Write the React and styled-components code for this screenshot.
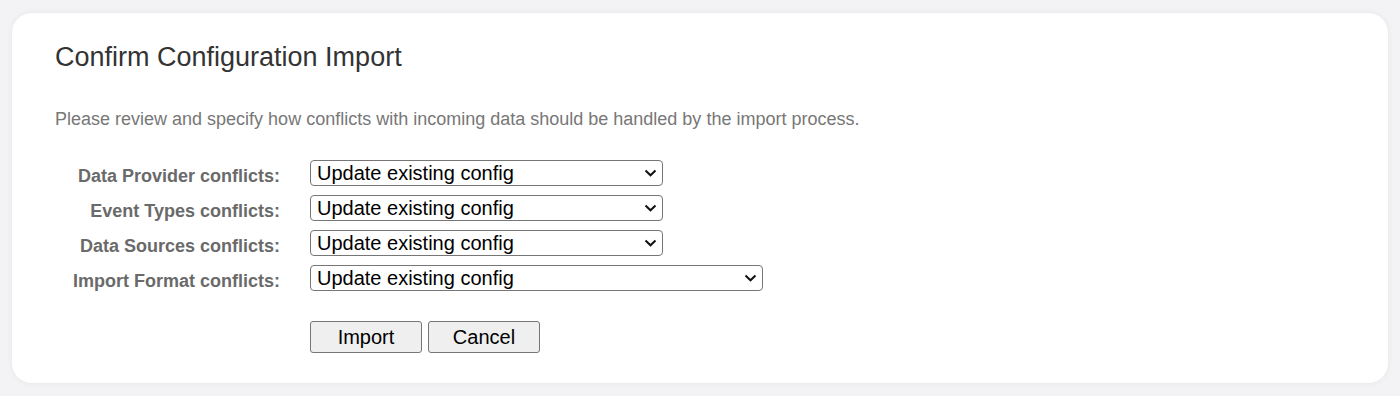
import React from "react";
import styled, { createGlobalStyle } from "styled-components";

const GlobalStyle = createGlobalStyle`
  html, body {
    margin: 0;
    padding: 0;
    background: #f3f3f5;
    font-family: "Liberation Sans", Arial, sans-serif;
  }
`;

const SPage = styled.div`
  padding: 13px 12px;
`;

const SCard = styled.div`
  background: #ffffff;
  border-radius: 20px;
  box-shadow: 0 0 6px rgba(0, 0, 0, 0.06);
  padding: 29px 43px 30px 43px;
`;

const STitle = styled.h1`
  margin: 0;
  font-size: 27px;
  line-height: 31px;
  font-weight: normal;
  color: #333333;
`;

const SIntro = styled.p`
  margin: 36px 0 0;
  font-size: 18px;
  line-height: 21px;
  color: #777777;
`;

const SForm = styled.div`
  display: grid;
  grid-template-columns: 225px auto;
  column-gap: 30px;
  row-gap: 9px;
  margin-top: 30px;
  justify-items: start;
  align-items: center;
`;

const SLabel = styled.label`
  justify-self: end;
  font-size: 18px;
  line-height: 20px;
  font-weight: bold;
  color: #6a6a6a;
  padding-top: 5px;
`;

const SSelectWrap = styled.div`
  position: relative;
  display: flex;
`;

const SSelect = styled.select`
  appearance: none;
  -webkit-appearance: none;
  width: ${(props) => props.width}px;
  height: 26px;
  font-family: "Liberation Sans", Arial, sans-serif;
  font-size: 20px;
  line-height: 22px;
  color: #000;
  border: 1px solid #767676;
  border-radius: 4px;
  background: #fff;
  padding: 0 24px 0 6px;
`;

const SChevron = styled.svg`
  position: absolute;
  right: 6px;
  top: 9px;
  width: 13px;
  height: 8px;
  pointer-events: none;
`;

const SActions = styled.div`
  grid-column: 2;
  display: flex;
  gap: 6px;
  margin-top: 21px;
`;

const SButton = styled.button`
  width: 112px;
  height: 32px;
  font-family: "Liberation Sans", Arial, sans-serif;
  font-size: 20px;
  color: #000;
  background: #efefef;
  border: 1px solid #767676;
  border-radius: 3px;
  padding: 0;
`;

const rows = [
  { label: "Data Provider conflicts:", width: 353 },
  { label: "Event Types conflicts:", width: 353 },
  { label: "Data Sources conflicts:", width: 353 },
  { label: "Import Format conflicts:", width: 453 },
];

export default function App() {
  return (
    <>
      <GlobalStyle />
      <SPage>
        <SCard>
          <STitle>Confirm Configuration Import</STitle>
          <SIntro>
            Please review and specify how conflicts with incoming data should be
            handled by the import process.
          </SIntro>
          <SForm>
            {rows.map((r) => (
              <React.Fragment key={r.label}>
                <SLabel>{r.label}</SLabel>
                <SSelectWrap>
                  <SSelect width={r.width} defaultValue="update">
                    <option value="update">Update existing config</option>
                    <option value="skip">Skip existing config</option>
                  </SSelect>
                  <SChevron viewBox="0 0 13 8">
                    <path
                      d="M1.5 1.5 L6.5 6.3 L11.5 1.5"
                      fill="none"
                      stroke="#111"
                      strokeWidth="2"
                    />
                  </SChevron>
                </SSelectWrap>
              </React.Fragment>
            ))}
            <SActions>
              <SButton>Import</SButton>
              <SButton>Cancel</SButton>
            </SActions>
          </SForm>
        </SCard>
      </SPage>
    </>
  );
}
